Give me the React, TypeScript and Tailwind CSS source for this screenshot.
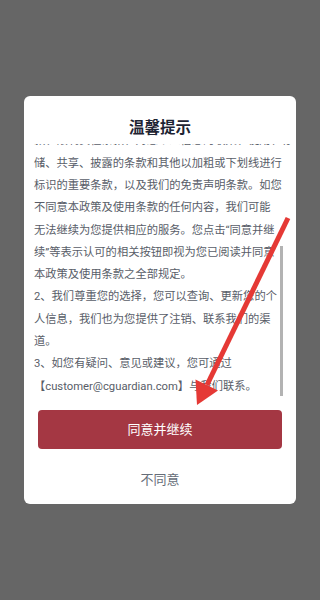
import React from "react";

// the policy text is broken into lines exactly as they wrap on the device
const policyLines: string[] = [
  "款、限制责任条款、对您个人信息的收集、使用、存",
  "储、共享、披露的条款和其他以加粗或下划线进行",
  "标识的重要条款，以及我们的免责声明条款。如您",
  "不同意本政策及使用条款的任何内容，我们可能",
  "无法继续为您提供相应的服务。您点击“同意并继",
  "续”等表示认可的相关按钮即视为您已阅读并同意",
  "本政策及使用条款之全部规定。",
  "2、我们尊重您的选择，您可以查询、更新您的个",
  "人信息，我们也为您提供了注销、联系我们的渠",
  "道。",
  "3、如您有疑问、意见或建议，您可通过",
  "【customer@cguardian.com】与我们联系。",
];

const Arrow: React.FC = () => (
  <svg
    className="pointer-events-none absolute left-0 top-0"
    width={320}
    height={600}
    viewBox="0 0 320 600"
  >
    <line x1={288} y1={218} x2={207} y2={385} stroke="#e53935" strokeWidth={5} strokeLinecap="butt" />
    <polygon points="197,405 195.5,379.5 218,390.5" fill="#e53935" />
  </svg>
);

const App: React.FC = () => {
  return (
    <div
      className="relative flex h-[600px] w-full items-center justify-center bg-[#666666]"
      style={{ fontFamily: 'Roboto, "Noto Sans CJK SC", sans-serif' }}
    >
      <div className="flex w-[272px] flex-col rounded-[6px] bg-white pt-[21px] pb-[14px]">
        <h1 className="h-[22px] text-center text-[15.5px] font-bold leading-[22px] text-[#1e2433]">温馨提示</h1>

        <div className="relative mt-[5px] h-[256px] overflow-hidden">
          <div className="-mt-[13.6px] pl-[10px] pr-[14px] text-[11.27px] text-[#585d68]">
            {policyLines.map((line, i) => (
              <div key={i} className="h-[22.3px] whitespace-nowrap leading-[22.3px]">
                {line}
              </div>
            ))}
          </div>
          <div className="absolute right-[13px] top-[102px] h-[150px] w-[3px] bg-[#b3b3b3]" />
        </div>

        <button className="mx-[14px] mt-[10px] h-[39px] rounded-[4px] bg-[#a43743] text-[13px] text-white">
          同意并继续
        </button>
        <button className="mt-[21px] h-[20px] text-center text-[13px] leading-[20px] text-[#666d78]">不同意</button>
      </div>
      <Arrow />
    </div>
  );
};

export default App;
